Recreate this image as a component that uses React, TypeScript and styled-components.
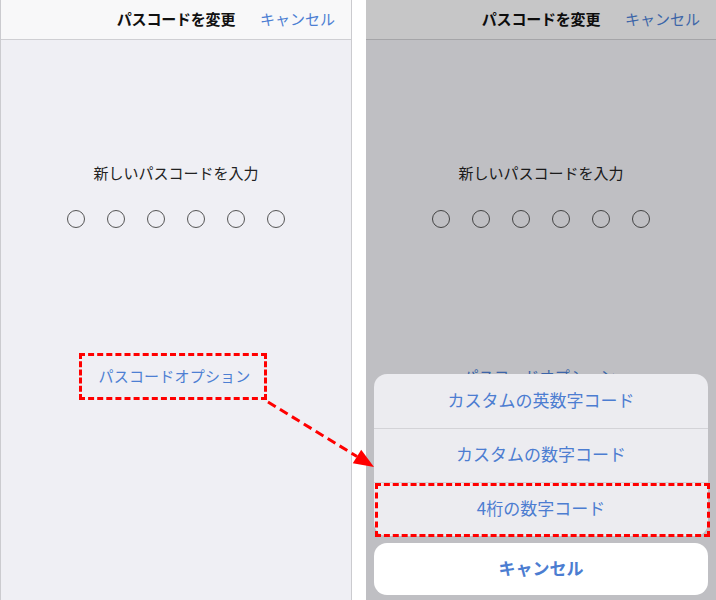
import styled, { createGlobalStyle } from 'styled-components'

const GlobalStyle = createGlobalStyle`
  html, body {
    margin: 0;
    padding: 0;
    background: #fff;
  }
  body {
    font-family: "Noto Sans CJK JP", "Noto Sans", sans-serif;
  }
`

const Stage = styled.div`
  position: relative;
  display: flex;
  gap: 14px;
  width: 716px;
  height: 600px;
  overflow: hidden;
  background: #fff;
`

const Screen = styled.section<{ $bordered?: boolean }>`
  position: relative;
  display: flex;
  flex-direction: column;
  box-sizing: border-box;
  width: ${(p) => (p.$bordered ? '352px' : '350px')};
  border-left: ${(p) => (p.$bordered ? '1px solid #cbcbcf' : 'none')};
  border-right: ${(p) => (p.$bordered ? '1px solid #cbcbcf' : 'none')};
  background: #efeff4;
  overflow: hidden;
`

const NavBar = styled.header`
  display: grid;
  grid-template-columns: 1fr auto 1fr;
  align-items: center;
  height: 40px;
  padding: 0 16px 2px;
  box-sizing: border-box;
  background: #f8f8f9;
  border-bottom: 1px solid #cfcfd3;
`

const NavTitle = styled.h1`
  grid-column: 2;
  margin: 0;
  font-size: 15px;
  font-weight: 700;
  color: #111;
  letter-spacing: -0.2px;
`

const NavAction = styled.span`
  grid-column: 3;
  justify-self: end;
  font-size: 15px;
  color: #4d7fd3;
`

const Body = styled.div`
  display: flex;
  flex-direction: column;
  align-items: center;
  padding-top: 123px;
`

const Prompt = styled.p`
  margin: 0;
  font-size: 15px;
  line-height: 20px;
  color: #222;
`

const Dots = styled.div`
  display: flex;
  gap: 22px;
  margin-top: 27px;
`

const Dot = styled.span`
  box-sizing: border-box;
  width: 18px;
  height: 18px;
  border: 1.5px solid #555;
  border-radius: 50%;
`

const OptionBox = styled.div<{ $marked?: boolean }>`
  display: flex;
  align-items: center;
  justify-content: center;
  box-sizing: border-box;
  width: 188px;
  height: 47px;
  margin-top: 125px;
  margin-right: 7px;
  padding: 0 0 2px 4px;
  border: 3px dashed ${(p) => (p.$marked ? '#f00' : 'transparent')};
`

const OptionLink = styled.span`
  font-size: 15px;
  line-height: 20px;
  color: #4d7fd3;
  letter-spacing: 0.2px;
`

const Dim = styled.div`
  position: absolute;
  inset: 0;
  background: rgba(0, 0, 0, 0.2);
`

const Sheet = styled.div`
  position: absolute;
  left: 8px;
  right: 8px;
  bottom: 5px;
  display: flex;
  flex-direction: column;
  gap: 7px;
`

const SheetGroup = styled.div`
  display: flex;
  flex-direction: column;
  border-radius: 13px;
  background: #ececf0;
`

const SheetRow = styled.div<{ $marked?: boolean }>`
  position: relative;
  display: flex;
  align-items: center;
  justify-content: center;
  box-sizing: border-box;
  height: 54px;
  padding-bottom: 4px;
  font-size: 17px;
  color: #4c7dd1;
  & + & {
    border-top: 1px solid #d3d3d7;
  }
  &::after {
    content: '';
    display: ${(p) => (p.$marked ? 'block' : 'none')};
    position: absolute;
    inset: 0px -2px -1px 1px;
    border: 3px dashed #f00;
  }
`

const SheetCancel = styled.div`
  display: flex;
  align-items: center;
  justify-content: center;
  box-sizing: border-box;
  height: 52px;
  padding-bottom: 4px;
  border-radius: 13px;
  background: #fff;
  font-size: 17px;
  font-weight: 700;
  color: #4c7dd1;
`

const Arrow = styled.svg`
  position: absolute;
  left: 0;
  top: 0;
  pointer-events: none;
`

function PasscodeScreen({ marked }: { marked?: boolean }) {
  return (
    <>
      <NavBar>
        <NavTitle>パスコードを変更</NavTitle>
        <NavAction>キャンセル</NavAction>
      </NavBar>
      <Body>
        <Prompt>新しいパスコードを入力</Prompt>
        <Dots>
          {Array.from({ length: 6 }).map((_, i) => (
            <Dot key={i} />
          ))}
        </Dots>
        <OptionBox $marked={marked}>
          <OptionLink>パスコードオプション</OptionLink>
        </OptionBox>
      </Body>
    </>
  )
}

export default function App() {
  return (
    <Stage>
      <GlobalStyle />
      <Screen $bordered>
        <PasscodeScreen marked />
      </Screen>
      <Screen>
        <PasscodeScreen />
        <Dim />
        <Sheet>
          <SheetGroup>
            <SheetRow>カスタムの英数字コード</SheetRow>
            <SheetRow>カスタムの数字コード</SheetRow>
            <SheetRow $marked>4桁の数字コード</SheetRow>
          </SheetGroup>
          <SheetCancel>キャンセル</SheetCancel>
        </Sheet>
      </Screen>
      <Arrow width="716" height="600" viewBox="0 0 716 600">
        <line
          x1="268"
          y1="402"
          x2="357"
          y2="456.5"
          stroke="#f00"
          strokeWidth="3"
          strokeDasharray="9 5"
        />
        <polygon points="374,467 361.2,449.7 352.8,463.3" fill="#f00" />
      </Arrow>
    </Stage>
  )
}
